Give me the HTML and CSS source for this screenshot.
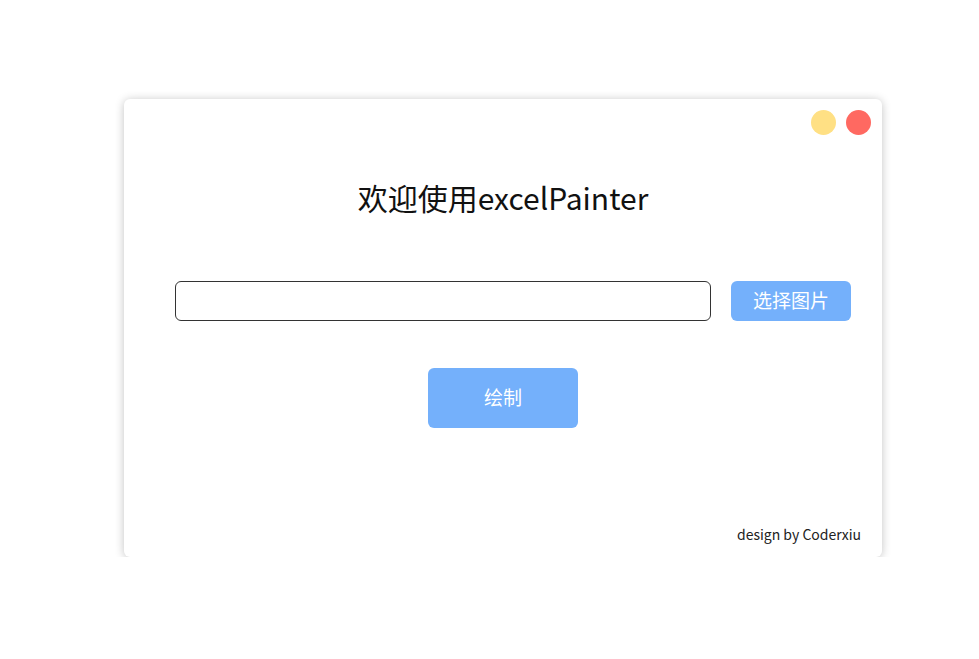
FILE: index.html
```html
<!DOCTYPE html>
<html lang="zh">
<head>
<meta charset="utf-8">
<title>excelPainter</title>
<link rel="stylesheet" href="styles.css">
</head>
<body>
<div class="page">
  <div class="window">
    <div class="controls">
      <span class="dot dot-min"></span>
      <span class="dot dot-close"></span>
    </div>
    <h1 class="title">欢迎使用excelPainter</h1>
    <div class="file-row">
      <input class="path-input" type="text">
      <button class="btn btn-pick">选择图片</button>
    </div>
    <div class="draw-row">
      <button class="btn btn-draw">绘制</button>
    </div>
    <div class="footer">design by Coderxiu</div>
  </div>
</div>
</body>
</html>
```
FILE: styles.css
```css
html, body {
  margin: 0;
  padding: 0;
  background: #fff;
}
body {
  font-family: "Noto Sans CJK SC", "Noto Sans", sans-serif;
  color: #111;
}
.page {
  padding: 99px 0 0 124px;
}
.window {
  width: 758px;
  height: 458px;
  box-sizing: border-box;
  background: #fff;
  border-radius: 6px;
  box-shadow: 0 1px 10px rgba(0,0,0,0.24);
  display: flex;
  flex-direction: column;
  padding: 11px 11px 0 11px;
}
.controls {
  display: flex;
  justify-content: flex-end;
  gap: 10px;
}
.dot {
  width: 25px;
  height: 25px;
  border-radius: 50%;
}
.dot-min { background: #ffe084; }
.dot-close { background: #ff6961; }
.title {
  margin: 42px 0 0;
  text-align: center;
  font-size: 30px;
  font-weight: 400;
  line-height: 40px;
  color: #111;
}
.file-row {
  display: flex;
  margin: 64px 0 0 40px;
  gap: 20px;
}
.path-input {
  width: 536px;
  height: 40px;
  box-sizing: border-box;
  border: 1px solid #333;
  border-radius: 6px;
  outline: none;
  padding: 0 10px;
  margin: 0;
}
.btn {
  border: none;
  background: #74b0fb;
  color: #fff;
  font-family: "Noto Sans CJK SC", sans-serif;
  font-size: 19px;
  border-radius: 6px;
  padding: 0 0 3px;
  margin: 0;
}
.btn-pick {
  width: 120px;
  height: 40px;
}
.draw-row {
  display: flex;
  justify-content: center;
  margin-top: 47px;
}
.btn-draw {
  width: 150px;
  height: 60px;
}
.footer {
  margin-top: auto;
  align-self: flex-end;
  padding: 0 10px 13px 0;
  font-size: 14px;
  color: #222;
}
```
